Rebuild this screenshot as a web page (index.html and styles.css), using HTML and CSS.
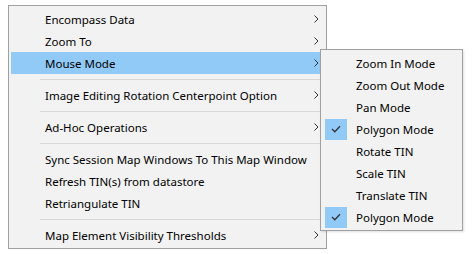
FILE: index.html
```html
<!DOCTYPE html>
<html lang="en">
<head>
    <meta charset="UTF-8">
    <title>Context Menu</title>
    <link rel="stylesheet" href="styles.css">
</head>
<body>
    <div class="stage">
        <ul class="menu main-menu">
            <li class="item has-sub">Encompass Data<svg class="arrow" viewBox="0 0 5 8"><polyline points="0.5,0.5 4,4 0.5,7.5"/></svg></li>
            <li class="item has-sub">Zoom To<svg class="arrow" viewBox="0 0 5 8"><polyline points="0.5,0.5 4,4 0.5,7.5"/></svg></li>
            <li class="item has-sub active">Mouse Mode<svg class="arrow" viewBox="0 0 5 8"><polyline points="0.5,0.5 4,4 0.5,7.5"/></svg></li>
            <li class="separator"></li>
            <li class="item has-sub">Image Editing Rotation Centerpoint Option<svg class="arrow" viewBox="0 0 5 8"><polyline points="0.5,0.5 4,4 0.5,7.5"/></svg></li>
            <li class="separator"></li>
            <li class="item has-sub">Ad-Hoc Operations<svg class="arrow" viewBox="0 0 5 8"><polyline points="0.5,0.5 4,4 0.5,7.5"/></svg></li>
            <li class="separator"></li>
            <li class="item">Sync Session Map Windows To This Map Window</li>
            <li class="item">Refresh TIN(s) from datastore</li>
            <li class="item">Retriangulate TIN</li>
            <li class="separator"></li>
            <li class="item has-sub">Map Element Visibility Thresholds<svg class="arrow" viewBox="0 0 5 8"><polyline points="0.5,0.5 4,4 0.5,7.5"/></svg></li>
        </ul>

        <!-- submenu of "Mouse Mode" -->
        <ul class="menu sub-menu">
            <li class="item"><span class="check"></span>Zoom In Mode</li>
            <li class="item"><span class="check"></span>Zoom Out Mode</li>
            <li class="item"><span class="check"></span>Pan Mode</li>
            <li class="item"><span class="check checked"><svg viewBox="0 0 10 8"><polyline points="1,4 3.8,6.8 9,1.2"/></svg></span>Polygon Mode</li>
            <li class="item"><span class="check"></span>Rotate TIN</li>
            <li class="item"><span class="check"></span>Scale TIN</li>
            <li class="item"><span class="check"></span>Translate TIN</li>
            <li class="item"><span class="check checked"><svg viewBox="0 0 10 8"><polyline points="1,4 3.8,6.8 9,1.2"/></svg></span>Polygon Mode</li>
        </ul>
    </div>
</body>
</html>
```

FILE: styles.css
```css
body {
    margin: 0;
    background-color: #ffffff;
    font-family: "Noto Sans", "Open Sans", sans-serif;
    font-size: 11.5px;
    color: #000000;
}

.stage {
    position: relative;
    width: 472px;
    height: 254px;
    padding: 5px 0 0 8px;
    box-sizing: border-box;
}

.menu {
    list-style: none;
    margin: 0;
    padding: 2px;
    background-color: #f2f2f2;
    border: 1px solid #a0a0a0;
}

.main-menu {
    width: 313px;
}

.item {
    position: relative;
    display: flex;
    align-items: center;
    height: 22px;
    padding-left: 34px;
    white-space: nowrap;
}

.item.active {
    background-color: #91c9f7;
}

.arrow {
    position: absolute;
    right: 5px;
    top: 7px;
    width: 5px;
    height: 8px;
    fill: none;
    stroke: #333333;
    stroke-width: 1;
}

.separator {
    height: 10px;
    display: flex;
    align-items: center;
    margin-left: 29px;
}

.separator::after {
    content: "";
    display: block;
    width: 100%;
    height: 1px;
    background-color: #d7d7d7;
}

/* submenu */
.sub-menu {
    position: absolute;
    left: 320px;
    top: 49px;
    width: 137px;
    box-shadow: 1px 1px 2px rgba(0, 0, 0, 0.12);
}

.sub-menu .item {
    padding-left: 2px;
}

.check {
    display: flex;
    align-items: center;
    justify-content: center;
    width: 22px;
    height: 21px;
    margin-right: 9px;
}

.check.checked {
    background-color: #91c9f7;
}

.check svg {
    width: 10px;
    height: 8px;
    fill: none;
    stroke: #333333;
    stroke-width: 1.3;
}
```
